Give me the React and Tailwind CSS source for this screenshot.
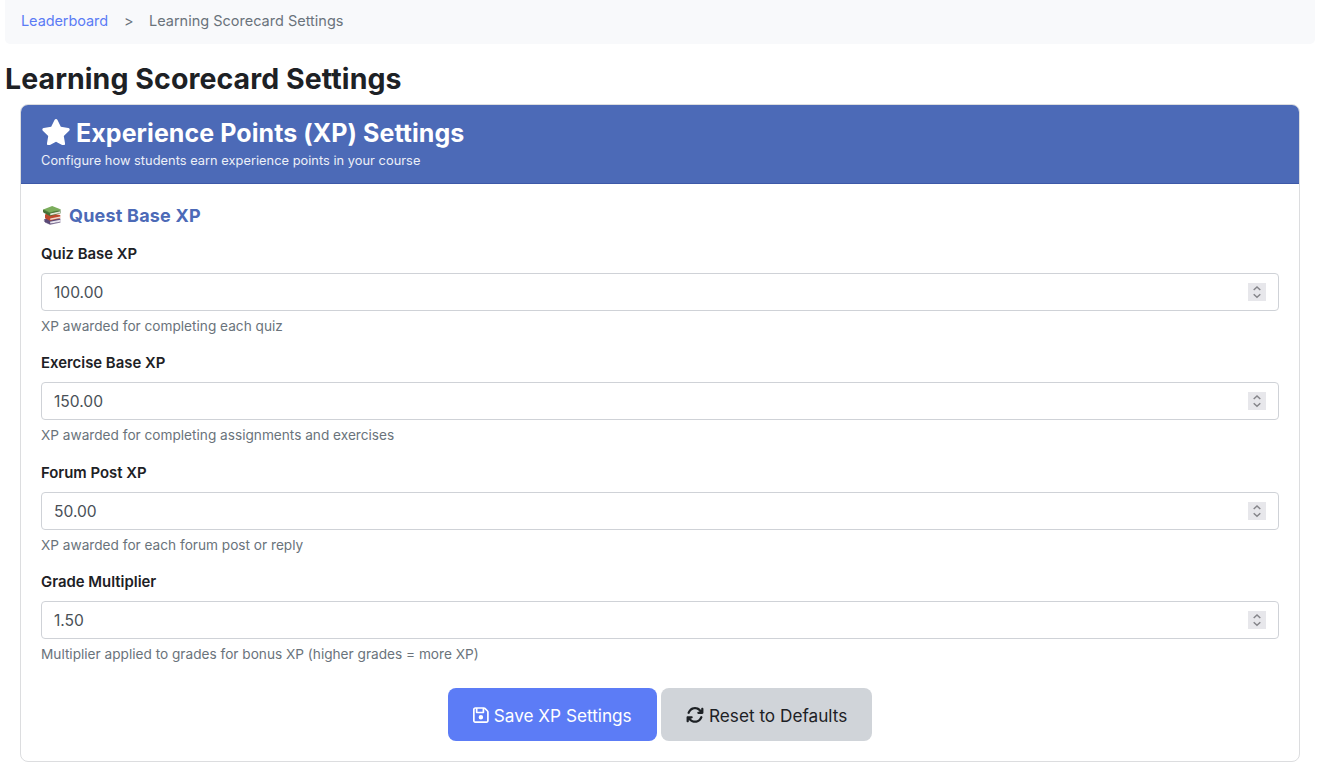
import { FaStar, FaRegFloppyDisk, FaArrowsRotate } from "react-icons/fa6";

const fields = [
  { id: "quiz", label: "Quiz Base XP", value: "100.00", help: "XP awarded for completing each quiz" },
  { id: "exercise", label: "Exercise Base XP", value: "150.00", help: "XP awarded for completing assignments and exercises" },
  { id: "forum", label: "Forum Post XP", value: "50.00", help: "XP awarded for each forum post or reply" },
  { id: "grade", label: "Grade Multiplier", value: "1.50", help: "Multiplier applied to grades for bonus XP (higher grades = more XP)" },
];

function Books() {
  return (
    <svg className="mb-[3px] ml-[1px] h-5 w-5 shrink-0" viewBox="0 0 20 20" aria-hidden="true">
      <path d="M2.8 14.4 6 12l12.5 1.8-.4 2.8L8 19.2 3 17Z" fill="#5b4a78" />
      <path d="m8 16.8 10.400-2v1.900L8.400 18.700Z" fill="#e9e5ee" />
      <path d="M2.700 14c-.6 1-.4 2.500.3 3L8 19.300l10.500-2.200" fill="none" stroke="#51416f" strokeWidth=".7" />
      <path d="m3 9.500 3.500-1.500 11.800 2-.2 3.600L8 15.800l-5-2.600Z" fill="#bd4a2e" />
      <path d="m8.200 13.500 9.800-1.900v1.500L8.300 15Z" fill="#f0d9cf" />
      <path d="M1.200 4.800c-.5 1.300-.2 2.500.5 3l6.100 3.100L18.700 8.300l-.2-2.900Z" fill="#466f36" />
      <path d="m8.200 8.600 10.200-2.300v1.800L8.300 10.300Z" fill="#e3e9d8" />
      <path d="M1.200 4.500 10.200 1l8.800 3.600L7.800 7.800Z" fill="#7bad5c" />
      <path d="m1.200 4.700 6.600 3.200 11-2.900" fill="none" stroke="#568942" strokeWidth=".6" />
    </svg>
  );
}

function Stepper() {
  return (
    <span className="flex h-[18px] w-[18px] items-center justify-center bg-[#e7e7eb]">
      <svg className="h-[18px] w-[18px]" viewBox="0 0 18 18" fill="none" stroke="#85858a" strokeWidth="1.5" aria-hidden="true">
        <path d="m5.700 7 3.300-3 3.300 3M5.700 11.200l3.300 3 3.300-3" />
      </svg>
    </span>
  );
}

function Field({ id, label, value, help }) {
  return (
    <div className="flex flex-col">
      <label htmlFor={id} className="h-5 pt-[1px] text-[14.9px] leading-5 font-semibold text-[#1d2125]">{label}</label>
      <div className="mt-[10px] flex h-[38px] items-center rounded-[4px] border border-[#cfd2d7] bg-white px-3">
        <input id={id} defaultValue={value} className="h-[26px] min-w-0 flex-1 pt-[1px] text-[15.6px] leading-6 text-[#495057] outline-none" />
        <Stepper />
      </div>
      <p className="mt-[6px] h-[18px] text-[13.65px] leading-[18px] text-[#6a737b]">{help}</p>
    </div>
  );
}

export default function App() {
  return (
    <div className="h-[772px] bg-white font-['Inter','Liberation_Sans',sans-serif] text-[#1d2125]">
      <nav className="mr-1 ml-[5px] flex h-11 items-center rounded-b-[5px] bg-[#f8f9fb] pb-[2px] pl-4 text-[14.5px]">
        <a href="#" className="w-[87px] whitespace-nowrap tracking-[-0.08px] text-[#5b7cf5]">Leaderboard</a>
        <span className="ml-4 w-[9px] text-[#6a737b]">&gt;</span>
        <span className="ml-4 text-[#6a737b]">Learning Scorecard Settings</span>
      </nav>
      <h1 className="mt-[17px] ml-[5px] h-[35px] text-[28.5px] leading-[35px] font-bold tracking-[0.07px]">Learning Scorecard Settings</h1>
      <main className="mt-2 mr-[19px] ml-5 overflow-hidden rounded-lg border border-[#dcdddf] bg-white">
        <header className="h-[79px] border-b border-[#3d59a8] bg-[#4c6ab7] px-5 pt-[13px] text-white">
          <h2 className="flex h-[30px] items-center text-[25px] leading-[30px] font-bold tracking-[0.07px]">
            <FaStar className="mr-[5px] mb-[2px] h-[26.5px] w-[30px]" />
            Experience Points (XP) Settings
          </h2>
          <p className="mt-[3px] text-[12.8px] leading-5 tracking-[0.035px] text-[#edf0f8]">Configure how students earn experience points in your course</p>
        </header>
        <section className="px-5 pt-[21px] pb-5">
          <h3 className="flex h-[22px] items-center gap-[7px] text-[18px] leading-[22px] font-bold tracking-[0.2px] text-[#4c6ab7]">
            <Books />
            Quest Base XP
          </h3>
          <div className="mt-4 flex flex-col gap-[17.33px]">
            {fields.map((f) => <Field key={f.id} {...f} />)}
          </div>
          <div className="mt-[25px] flex justify-center gap-1">
            <button className="flex h-[53px] w-[209px] items-center rounded-lg bg-[#5c7cf6] pt-[2px] pl-[25px] text-[17.2px] whitespace-nowrap text-white">
              <FaRegFloppyDisk className="mr-[5px] mb-[1px] h-[18px] w-[15.75px]" />
              Save XP Settings
            </button>
            <button className="flex h-[53px] w-[211px] items-center rounded-lg bg-[#d0d4d9] pt-[2px] pl-[25px] text-[17.2px] whitespace-nowrap text-[#1d2125]">
              <FaArrowsRotate className="mr-[5px] mb-[1px] h-[18px] w-[18px]" />
              Reset to Defaults
            </button>
          </div>
        </section>
      </main>
    </div>
  );
}
